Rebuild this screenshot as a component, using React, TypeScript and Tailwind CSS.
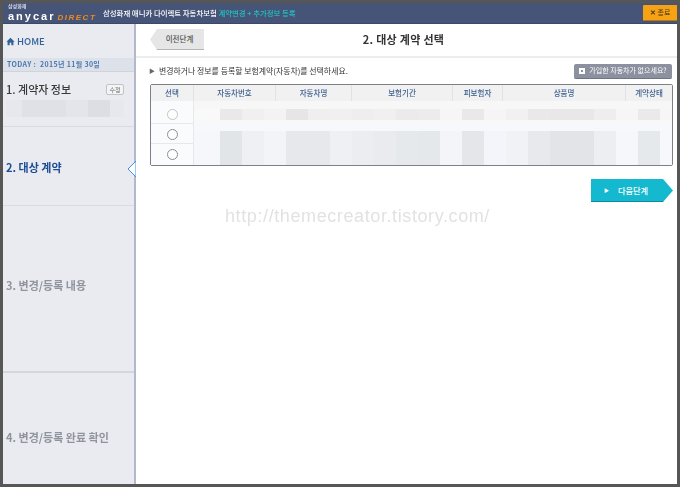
import React from "react";

const FONT = "font-['Noto_Sans_CJK_KR','Noto_Sans',sans-serif]";

const columns = [
  { label: "선택", width: "w-[43px]" },
  { label: "자동차번호", width: "w-[82px]" },
  { label: "자동차명", width: "w-[76px]" },
  { label: "보험기간", width: "w-[101px]" },
  { label: "피보험자", width: "w-[50px]" },
  { label: "상품명", width: "w-[123px]" },
  { label: "계약상태", flex: true },
];

// blurred-out cell contents, [width, colour]
const topBand: [number, string][] = [
  [26, "#f9f9f9"], [22, "#e9e9e9"], [22, "#f0f0f0"], [22, "#f3f3f3"],
  [22, "#e6e6e6"], [22, "#efefef"], [22, "#f0f0f0"], [22, "#eeeeee"],
  [22, "#f0f0f0"], [22, "#ebebeb"], [22, "#ececec"], [22, "#f6f6f6"],
  [22, "#e9e9e9"], [22, "#f5f5f5"], [22, "#f1f1f1"], [22, "#e9e9e9"],
  [44, "#e8e8e8"], [22, "#eeeeee"], [22, "#f6f6f6"], [22, "#eaeaea"], [30, "#f6f6f6"],
];

const lowBand: [number, string][] = [
  [26, "#f6f7fa"], [22, "#e2e5e8"], [22, "#eef0f3"], [22, "#f2f4f7"],
  [44, "#e6e8eb"], [22, "#eef0f3"], [22, "#ebedf0"], [22, "#e9ebef"],
  [22, "#e6e9ec"], [22, "#e5e8eb"], [22, "#f3f5f9"], [22, "#e4e6e9"],
  [22, "#f3f5fa"], [22, "#f0f2f5"], [22, "#e7e9ec"], [44, "#e2e4e8"],
  [22, "#eceef1"], [22, "#f6f7fb"], [22, "#e5e9ec"], [30, "#f7f8fb"],
];

function Radio({ light }: { light?: boolean }) {
  return (
    <span
      className={`block w-[11px] h-[11px] rounded-full border bg-white ${
        light ? "border-[#c4c4c4]" : "border-[#8f8f8f]"
      }`}
    />
  );
}

function Band({ blocks, className }: { blocks: [number, string][]; className: string }) {
  return (
    <div className={`flex ${className}`}>
      {blocks.map(([w, c], i) => (
        <div key={i} className="shrink-0" style={{ width: w, backgroundColor: c }} />
      ))}
    </div>
  );
}

function ContractTable() {
  return (
    <div className="border border-[#7d8087] rounded-[2px] bg-white overflow-hidden">
      <div className="flex h-[16px] bg-[#f1f1f1]">
        {columns.map((c) => (
          <div
            key={c.label}
            className={`${c.flex ? "flex-1" : c.width} border-r border-[#e2e2e2] last:border-r-0 flex items-center justify-center text-[7.5px] font-medium text-[#3d6090]`}
          >
            {c.label}
          </div>
        ))}
      </div>
      <div className="flex">
        <div className="w-[43px] shrink-0 border-r border-[#e6e8ee] bg-[#fafbfc]">
          <div className="h-[22px] pt-[5px] flex items-center justify-center">
            <Radio light />
          </div>
          <div className="h-[21px] pt-[1px] flex items-center justify-center border-y border-[#e6e8ee]">
            <Radio />
          </div>
          <div className="h-[21px] flex items-center justify-center">
            <Radio />
          </div>
        </div>
        <div className="flex-1 min-w-0 overflow-hidden">
          <div className="h-[8px] bg-[#f7f7f7]" />
          <Band blocks={topBand} className="h-[11px]" />
          <div className="h-[4px] bg-[#f8f8f8]" />
          <div className="h-[7px] bg-[#f7f8fb]" />
          <Band blocks={lowBand} className="h-[34px]" />
        </div>
      </div>
    </div>
  );
}

export default function App() {
  return (
    <div className={`${FONT} relative w-[680px] h-[487px] bg-white overflow-hidden`}>
      <div className="h-[487px] border-[3px] border-[#565656] flex flex-col blur-[0.3px]">
        {/* top bar */}
        <header className="h-[21px] shrink-0 bg-[#465478] border-b border-[#39486b] flex items-center pl-[5px]">
          <div className="w-[95px] shrink-0 flex flex-col">
            <span className="text-[5px] leading-[6px] text-[#d8dce6] font-bold">삼성화재</span>
            <span className="leading-[11px] font-['Liberation_Sans',sans-serif] font-bold whitespace-nowrap">
              <span className="text-[11px] text-white tracking-[2px]">anycar</span>
              <span className="ml-[2px] text-[#f08a1c] italic text-[8px] tracking-[1.5px]">DIRECT</span>
            </span>
          </div>
          <span className="text-[7.4px] font-medium text-white whitespace-nowrap">
            삼성화재 애니카 다이렉트 자동차보험{" "}
            <span className="text-[#20c4c0]">계약변경 + 추가정보 등록</span>
          </span>
          <button className="ml-auto h-[16px] w-[34px] bg-[#f7a213] border-b border-[#b87708] rounded-l-[1px] flex items-center justify-center gap-[2px] text-[7px] font-medium text-[#4a3a20]">
            <span className="font-bold">✕</span>종료
          </button>
        </header>

        <div className="flex flex-1 min-h-0">
          {/* sidebar */}
          <aside className="relative w-[133px] shrink-0 bg-[#e9ebf0] border-r-2 border-[#b3b9ca] flex flex-col">
            <div className="h-[34px] px-[3px] flex items-center gap-[2px] text-[9.5px] font-medium text-[#33629b]">
              <svg viewBox="0 0 12 12" className="w-[9px] h-[9px] fill-[#33629b]">
                <path d="M6 1 0.5 6.2h1.6V11h2.8V7.6h2.2V11h2.8V6.2h1.6z" />
              </svg>
              HOME
            </div>
            <div className="h-[14px] bg-[#dde1e9] border-b border-[#cfd3dc] px-[4px] flex items-center text-[7px] tracking-[0.35px] font-bold text-[#4a78ae] whitespace-nowrap">
              TODAY :&nbsp;&nbsp;2015년 11월 30일
            </div>
            <div className="h-[55px] border-b border-[#d8dbe1] px-[3px] pt-[9px]">
              <div className="flex items-center justify-between pr-[7px]">
                <span className="text-[11px] leading-[16px] font-medium text-[#3a3a3a]">1. 계약자 정보</span>
                <span className="w-[18px] h-[11px] border border-[#bfc2c8] rounded-[2px] bg-[#f4f4f4] flex items-center justify-center text-[6px] text-[#666]">
                  수정
                </span>
              </div>
              <div className="mt-[3px] w-[118px] h-[17px] bg-[#e6e8ed] flex">
                <div className="w-[16px]" />
                <div className="w-[44px] bg-[#dfe1e6]" />
                <div className="w-[22px] bg-[#e3e5ea]" />
                <div className="w-[22px] bg-[#dcdee3]" />
              </div>
            </div>
            <div className="h-[79px] border-b border-[#d8dbe1] px-[3px] pt-[3px] flex items-center">
              <span className="text-[11px] font-bold text-[#1c4c94]">2. 대상 계약</span>
            </div>
            <div className="h-[167px] border-b-2 border-[#d3d6dc] px-[3px] pb-[6px] flex items-center">
              <span className="text-[11px] font-bold text-[#8f939c]">3. 변경/등록 내용</span>
            </div>
            <div className="flex-1 px-[3px] pt-[50px]">
              <span className="text-[11px] font-bold text-[#8f939c]">4. 변경/등록 완료 확인</span>
            </div>
            {/* active step pointer */}
            <svg
              viewBox="0 0 9 16"
              className="absolute right-[-2px] top-[137px] w-[9px] h-[16px]"
            >
              <path d="M9 0 1 8l8 8z" fill="#fff" stroke="#3d8ee8" strokeWidth="1" />
            </svg>
          </aside>

          {/* main */}
          <main className="flex-1 min-w-0 flex flex-col">
            <div className="h-[34px] shrink-0 border-b-2 border-[#ebedf1] relative flex items-center justify-center pr-[6px] pb-[2px]">
              <button className="absolute left-[14px] top-[5px] w-[54px] h-[21px] flex items-center justify-center pl-[5px] text-[7.5px] font-medium text-[#555] bg-[#e6e6e6] border-b border-[#b5b5b5] [clip-path:polygon(7px_0,100%_0,100%_100%,7px_100%,0_50%)]">
                이전단계
              </button>
              <h1 className="text-[11px] font-bold text-[#333] tracking-[0.3px]">2. 대상 계약 선택</h1>
            </div>
            <div className="pt-[5px] pl-[12px] pr-[4px]">
              <div className="flex items-center justify-between h-[16px] pl-[1px]">
                <div className="flex items-center gap-[4px] text-[7.9px] text-[#333]">
                  <span className="text-[6px] text-[#666]">▶</span>
                  변경하거나 정보를 등록할 보험계약(자동차)를 선택하세요.
                </div>
                <button className="mr-[1px] w-[98px] h-[15px] bg-[#8c919f] border-b border-[#6f7482] rounded-[2px] flex items-center justify-center gap-[4px] text-[7px] text-white">
                  <span className="w-[6px] h-[6px] bg-white flex items-center justify-center">
                    <span className="w-[2px] h-[2px] bg-[#8c919f]" />
                  </span>
                  가입한 자동차가 없으세요?
                </button>
              </div>
              <div className="mt-[5px] ml-[2px]">
                <ContractTable />
              </div>
              <div className="flex justify-end mt-[13px]">
                <button className="w-[82px] h-[23px] bg-[#14b8cf] border-b border-[#0b8b9e] flex items-center justify-center gap-[9px] pr-[12px] text-[8.2px] font-medium text-white [clip-path:polygon(0_0,72px_0,100%_50%,72px_100%,0_100%)]">
                  <span className="text-[5px]">▶</span>다음단계
                </button>
              </div>
            </div>
          </main>
        </div>
      </div>
      {/* blog watermark over the page */}
      <div className="absolute left-[225px] top-[206px] text-[18px] leading-[20px] tracking-[0.6px] font-['Liberation_Sans',sans-serif] text-[#e2e2e2] whitespace-nowrap">
        http://themecreator.tistory.com/
      </div>
    </div>
  );
}
